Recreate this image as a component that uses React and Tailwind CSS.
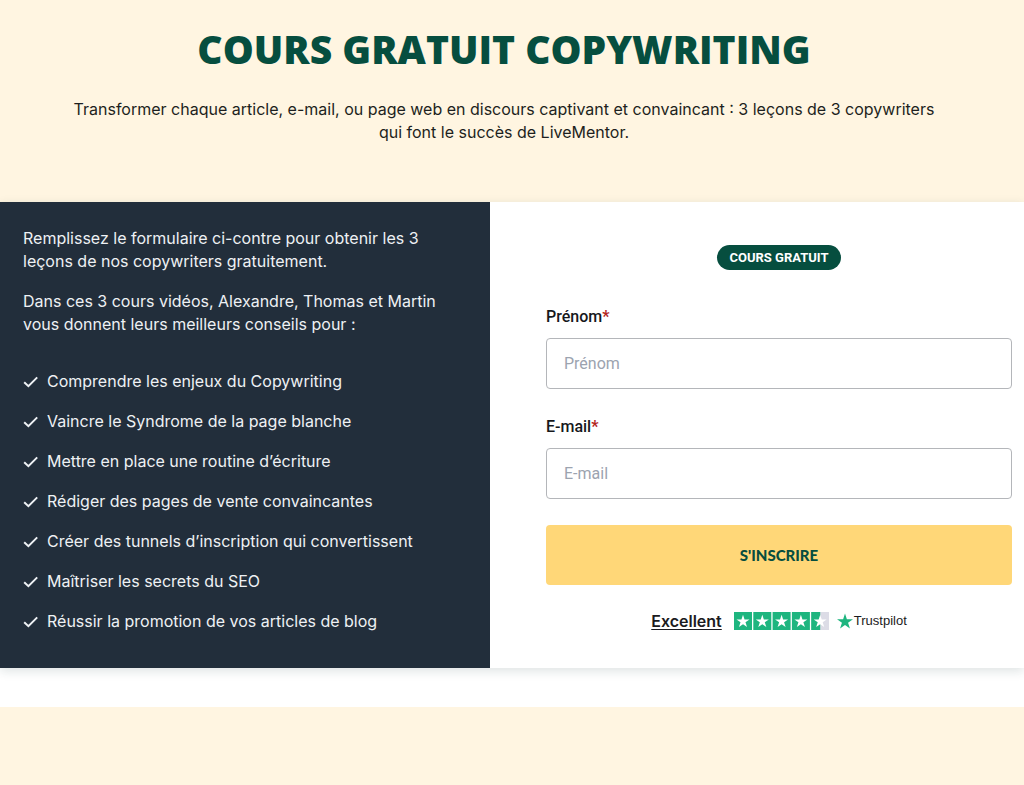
const benefits = [
  "Comprendre les enjeux du Copywriting",
  "Vaincre le Syndrome de la page blanche",
  "Mettre en place une routine d’écriture",
  "Rédiger des pages de vente convaincantes",
  "Créer des tunnels d’inscription qui convertissent",
  "Maîtriser les secrets du SEO",
  "Réussir la promotion de vos articles de blog",
];

const STAR = "M12 2l2.36 7.26H22l-6.18 4.48 2.36 7.26L12 16.5 5.82 21l2.36-7.26L2 9.26h7.64z";

function CheckMark() {
  return (
    <svg viewBox="0 0 16 16" className="size-4 shrink-0" fill="none" stroke="currentColor" strokeWidth="2" aria-hidden="true">
      <path d="M1.2 8.2l4.2 4L14.2 3.4" />
    </svg>
  );
}

function Rating() {
  return (
    <svg viewBox="0 0 95 18" className="h-[18px] w-[95px]" role="img" aria-label="4,5 / 5">
      {[0, 1, 2, 3, 4].map((i) => (
        <g key={i} transform={`translate(${i * 19.3} 0)`}>
          <rect width="18" height="18" fill={i === 4 ? "#dcdce6" : "#1eb57f"} />
          {i === 4 && <rect width="9" height="18" fill="#1eb57f" />}
          <path d={STAR} transform="translate(1.2 1.4) scale(.65)" fill="#fff" />
        </g>
      ))}
    </svg>
  );
}

function Field({ id, label, type }) {
  return (
    <div className="flex flex-col gap-[9px]">
      <label htmlFor={id} className="text-base leading-6 font-medium text-[#16181c]">
        {label}
        <span className="font-bold text-[#b3261e]">*</span>
      </label>
      <input
        id={id}
        type={type}
        placeholder={label}
        required
        className="h-[51px] w-full rounded border border-[#b4b6ba] bg-white px-[17px] text-base text-[#16181c] placeholder:text-[#9ca3af]"
      />
    </div>
  );
}

export default function App() {
  return (
    <div className="min-h-screen bg-[#fff5e1] font-[Roboto,sans-serif] text-[#1d1f20]">
      <header className="flex flex-col items-center gap-6 pt-6 pr-4 pb-[58px] text-center">
        <h1 className="font-['Open_Sans',sans-serif] text-[39px] leading-[50px] font-extrabold text-[#064e3f]">
          COURS GRATUIT COPYWRITING
        </h1>
        <p className="max-w-[888px] font-[Inter,sans-serif] text-base leading-[23px]">
          Transformer chaque article, e-mail, ou page web en discours captivant et convaincant : 3 leçons de 3
          copywriters qui font le succès de LiveMentor.
        </p>
      </header>
      <main className="bg-white pb-[39px]">
        <div className="grid grid-cols-[490fr_534fr] shadow-[0_3px_10px_rgba(20,60,60,0.14)]">
          <section className="bg-[#222e3b] px-[23px] pt-[25px] pb-[35px] font-[Inter,sans-serif] text-base leading-[23px] text-[#eef1f4]">
            <div className="flex max-w-[430px] flex-col gap-[17px]">
              <p>Remplissez le formulaire ci-contre pour obtenir les 3 leçons de nos copywriters gratuitement.</p>
              <p>Dans ces 3 cours vidéos, Alexandre, Thomas et Martin vous donnent leurs meilleurs conseils pour :</p>
            </div>
            <ul className="mt-[34px] flex flex-col gap-[17px]">
              {benefits.map((text) => (
                <li key={text} className="flex items-center gap-2">
                  <CheckMark />
                  {text}
                </li>
              ))}
            </ul>
          </section>
          <section className="flex flex-col items-center bg-white pt-[43px] pr-3 pl-14">
            <span className="rounded-full bg-[#064e3f] px-3 text-[13px] leading-[25px] font-bold text-white">
              COURS GRATUIT
            </span>
            <form className="mt-[35px] flex w-full flex-col gap-[26px]">
              <Field id="prenom" label="Prénom" type="text" />
              <Field id="email" label="E-mail" type="email" />
              <button
                type="button"
                className="h-[60px] rounded bg-[#ffd778] font-[Lato,sans-serif] text-[15px] font-black text-[#064e3f]"
              >
                S'INSCRIRE
              </button>
            </form>
            <div className="mt-6 flex items-center gap-2 text-[#1b1b21]">
              <a href="#avis" className="mr-1 font-[Inter,sans-serif] text-base leading-6 font-semibold underline underline-offset-2">
                Excellent
              </a>
              <Rating />
              <span className="flex items-center gap-px font-['Liberation_Sans',sans-serif] text-[13px] leading-6">
                <svg viewBox="2 2 20 19" className="h-4 w-4" aria-hidden="true">
                  <path d={STAR} fill="#1eb57f" />
                </svg>
                Trustpilot
              </span>
            </div>
          </section>
        </div>
      </main>
    </div>
  );
}
